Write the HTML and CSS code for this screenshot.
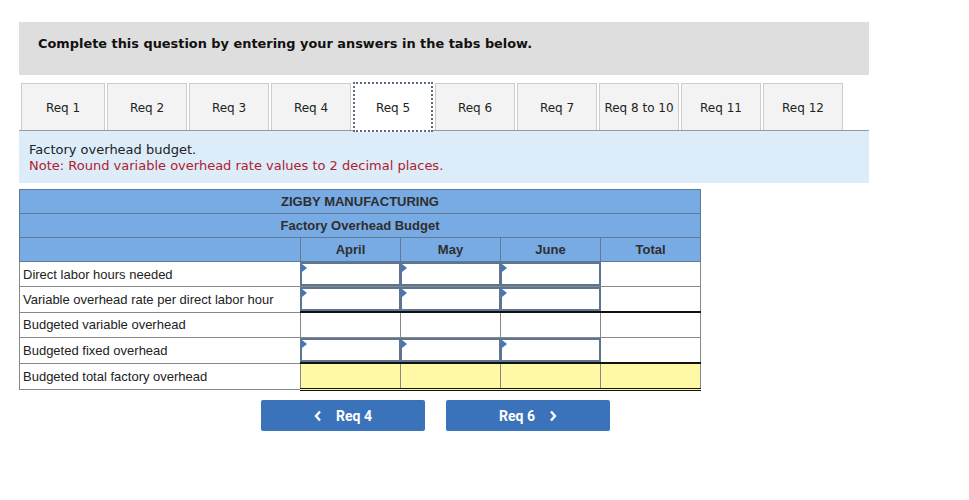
FILE: index.html
```html
<!DOCTYPE html>
<html>
<head>
<meta charset="utf-8">
<link rel="stylesheet" href="styles.css">
</head>
<body>
<div class="page">
  <div class="instructions">Complete this question by entering your answers in the tabs below.</div>
  <div class="tabs">
    <div class="tab first">Req 1</div>
    <div class="tab">Req 2</div>
    <div class="tab">Req 3</div>
    <div class="tab">Req 4</div>
    <div class="tab active">Req 5</div>
    <div class="tab">Req 6</div>
    <div class="tab">Req 7</div>
    <div class="tab">Req 8 to 10</div>
    <div class="tab">Req 11</div>
    <div class="tab">Req 12</div>
  </div>
  <div class="info">
    <div>Factory overhead budget.</div>
    <div class="note">Note: Round variable overhead rate values to 2 decimal places.</div>
  </div>
  <table class="budget">
    <colgroup><col class="c-label"><col class="c-num"><col class="c-num"><col class="c-num"><col class="c-num"></colgroup>
    <tr class="hdr"><td colspan="5">ZIGBY MANUFACTURING</td></tr>
    <tr class="hdr"><td colspan="5">Factory Overhead Budget</td></tr>
    <tr class="hdr cols"><td class="blank"></td><td>April</td><td>May</td><td>June</td><td>Total</td></tr>
    <tr>
      <td class="label">Direct labor hours needed</td>
      <td class="in"><div class="box"><span class="flag"></span></div></td>
      <td class="in"><div class="box"><span class="flag"></span></div></td>
      <td class="in"><div class="box"><span class="flag"></span></div></td>
      <td></td>
    </tr>
    <tr class="under">
      <td class="label">Variable overhead rate per direct labor hour</td>
      <td class="in"><div class="box"><span class="flag"></span></div></td>
      <td class="in"><div class="box"><span class="flag"></span></div></td>
      <td class="in"><div class="box"><span class="flag"></span></div></td>
      <td></td>
    </tr>
    <tr>
      <td class="label">Budgeted variable overhead</td>
      <td></td><td></td><td></td><td></td>
    </tr>
    <tr class="under">
      <td class="label">Budgeted fixed overhead</td>
      <td class="in"><div class="box"><span class="flag"></span></div></td>
      <td class="in"><div class="box"><span class="flag"></span></div></td>
      <td class="in"><div class="box"><span class="flag"></span></div></td>
      <td></td>
    </tr>
    <tr class="total">
      <td class="label">Budgeted total factory overhead</td>
      <td class="y"></td><td class="y"></td><td class="y"></td><td class="y"></td>
    </tr>
  </table>
  <div class="nav">
    <div class="btn"><svg class="chev" width="8" height="12" viewBox="0 0 8 12"><path d="M6 1.5 L2 6 L6 10.5" fill="none" stroke="#fff" stroke-width="2.4"/></svg><span>Req 4</span></div>
    <div class="btn"><span>Req 6</span><svg class="chev" width="8" height="12" viewBox="0 0 8 12"><path d="M2 1.5 L6 6 L2 10.5" fill="none" stroke="#fff" stroke-width="2.4"/></svg></div>
  </div>
</div>
</body>
</html>
```

FILE: styles.css
```css
html, body { margin: 0; padding: 0; background: #fff; }
.page { margin: 22px 0 0 19px; width: 850px; }
.instructions {
  background: #dedede;
  height: 53px;
  box-sizing: border-box;
  padding: 14px 0 0 19px;
  font-family: "DejaVu Sans", Verdana, sans-serif;
  font-weight: bold;
  font-size: 12.9px;
  color: #111;
}
.tabs {
  display: flex;
  gap: 2px;
  margin-top: 8px;
  padding-left: 2px;
  border-bottom: 1px solid #999;
  height: 47px;
}
.tab {
  width: 80px;
  box-sizing: border-box;
  height: 47px;
  padding-top: 1px;
  background: #f3f3f3;
  border: 1px solid #ccc;
  border-bottom: none;
  display: flex;
  align-items: center;
  justify-content: center;
  font-family: "DejaVu Sans", Verdana, sans-serif;
  font-size: 12px;
  color: #222;
}
.tab.first { width: 84px; }
.tab.active {
  background: #fff;
  border: 2px dotted #5d6a80;
  height: 50px;
  margin-top: -1px;
  position: relative;
  z-index: 1;
}
.info {
  background: #dcecf9;
  height: 52px;
  box-sizing: border-box;
  padding: 11px 0 0 10px;
  font-family: "DejaVu Sans", Verdana, sans-serif;
  font-size: 13px;
  line-height: 16px;
  color: #222;
}
.note { color: #b0202e; }
.budget {
  margin-top: 6px;
  border-collapse: collapse;
  table-layout: fixed;
  width: 682px;
  font-family: "Liberation Sans", Arial, sans-serif;
  font-size: 13px;
  color: #222;
}
.c-label { width: 281px; }
.c-num { width: 100px; }
.budget td {
  border: 1px solid #888;
  padding: 0;
  height: 24px;
}
.hdr td {
  background: #78aae4;
  border-color: #5f7a96;
  text-align: center;
  font-weight: bold;
  color: #2e2e2e;
  height: 23px;
}
.label { padding-left: 3px !important; }
.box {
  height: 24px;
  box-sizing: border-box;
  border: 2px solid #5d7590;
  margin: -1px;
  position: relative;
  background: #fff;
}
.flag {
  position: absolute;
  left: 0;
  top: 0;
  width: 0;
  height: 0;
  border-top: 4px solid transparent;
  border-bottom: 4px solid transparent;
  border-left: 5px solid #3f78c0;
}
.under td:not(.label) { border-bottom: 2px solid #111; }
.total td:not(.label) { border-bottom: 3px double #111; }
.y { background: #fff9a6; }
.nav {
  display: flex;
  gap: 21px;
  margin: 9px 0 0 242px;
}
.btn {
  width: 164px;
  height: 31px;
  background: #3a73b9;
  border-radius: 2px;
  color: #fff;
  font-family: Roboto, "Liberation Sans", sans-serif;
  font-weight: bold;
  font-size: 14px;
  display: flex;
  align-items: center;
  justify-content: center;
  gap: 14px;
}
```
